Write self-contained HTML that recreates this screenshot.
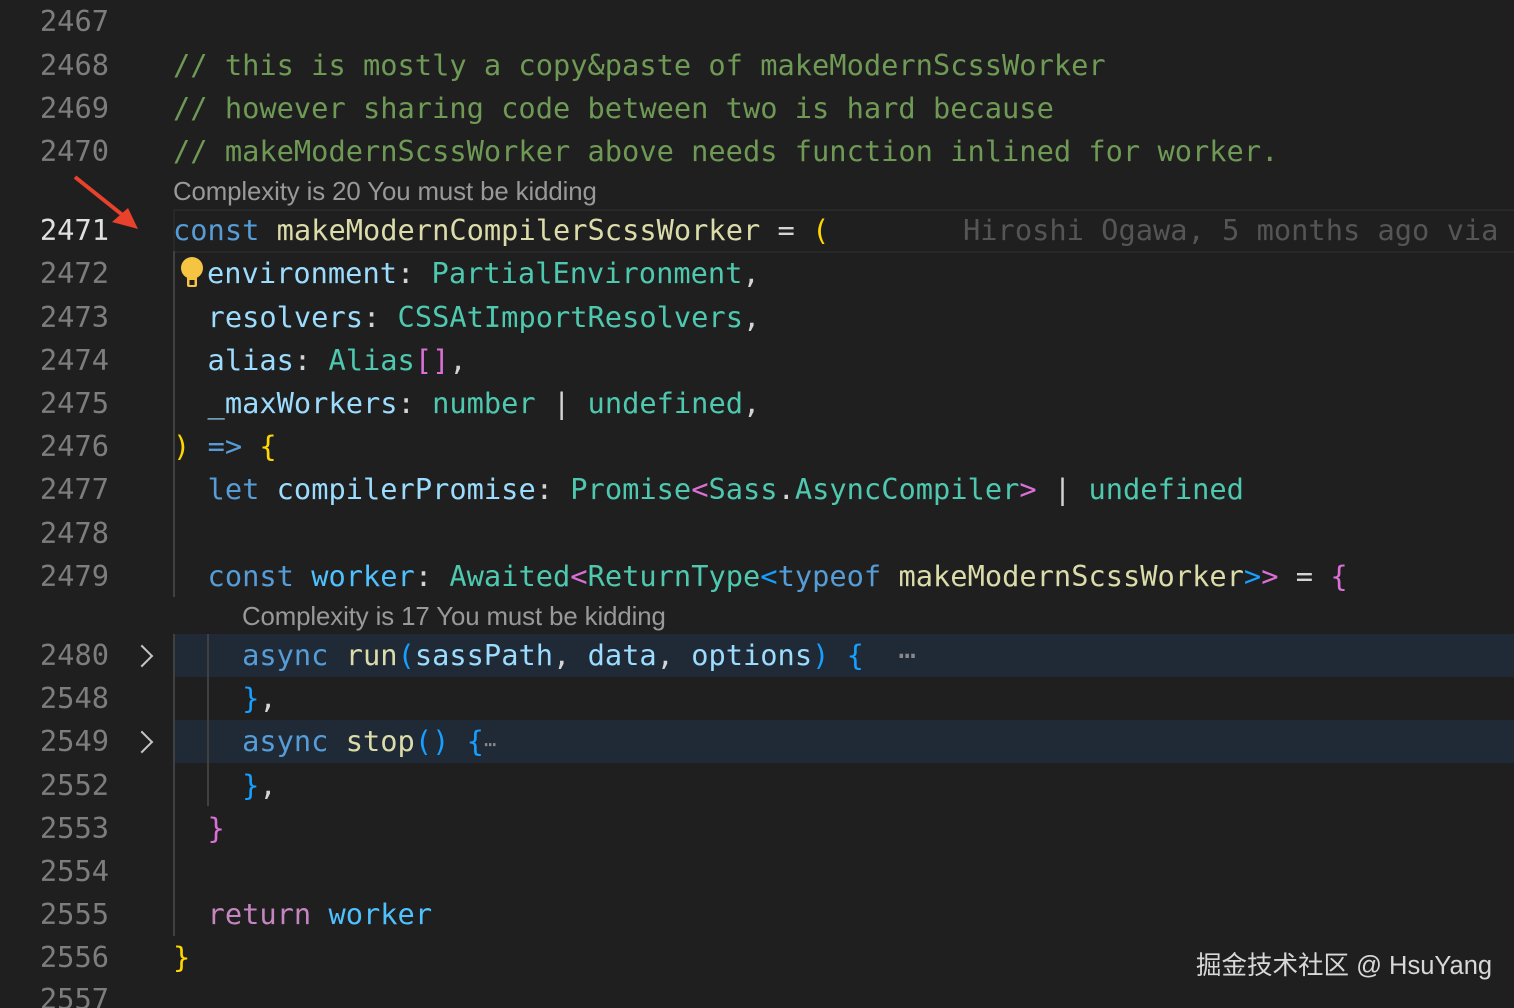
<!DOCTYPE html>
<html><head><meta charset="utf-8"><style>
html,body{margin:0;padding:0;background:#1f1f1f;width:1514px;height:1008px;overflow:hidden;position:relative}
.ln{position:absolute;left:0;width:109px;text-align:right;font:28.7px/43px "DejaVu Sans Mono","Liberation Mono",monospace;color:#7d7d7d;margin-top:2px}
.c{position:absolute;left:173px;white-space:pre;font:28.7px/43px "DejaVu Sans Mono","Liberation Mono",monospace;color:#d4d4d4;margin-top:2px}
.lens{position:absolute;white-space:pre;font:25.8px/30px "Liberation Sans",sans-serif;color:#999;letter-spacing:-0.1px}
.k{color:#569cd6}.f{color:#dcdcaa}.v{color:#9cdcfe}.t{color:#4ec9b0}.cm{color:#6f9a55}
.y{color:#ffd700}.p{color:#da70d6}.b{color:#179fff}.r{color:#c586c0}.cn{color:#4fc1ff}
.hl{position:absolute;left:173px;right:0;background:#1f2a36}
.g{position:absolute;width:2px;background:#404040}
.chev{position:absolute;left:137px;width:14px;height:14px;border-right:2px solid #c5c5c5;border-top:2px solid #c5c5c5;transform:rotate(45deg)}
</style></head><body>
<div class="hl" style="top:634px;height:43px"></div>
<div class="hl" style="top:720px;height:43px"></div>
<div style="position:absolute;left:173px;right:0;top:209px;height:40px;border:2px solid #282828;border-right:none"></div>
<div class="g" style="left:173px;top:251px;height:346px"></div>
<div class="g" style="left:173px;top:634px;height:302px"></div>
<div class="g" style="left:207px;top:634px;height:172px"></div>

<div class="ln" style="top:-2px">2467</div>
<div class="ln" style="top:42px">2468</div>
<div class="c cm" style="top:42px">// this is mostly a copy&amp;paste of makeModernScssWorker</div>
<div class="ln" style="top:85px">2469</div>
<div class="c cm" style="top:85px">// however sharing code between two is hard because</div>
<div class="ln" style="top:128px">2470</div>
<div class="c cm" style="top:128px">// makeModernScssWorker above needs function inlined for worker.</div>
<div class="lens" style="left:173px;top:177px">Complexity is 20 You must be kidding</div>
<svg style="position:absolute;left:70px;top:172px" width="75" height="62"><line x1="5" y1="5" x2="55" y2="45" stroke="#e8412c" stroke-width="4"/><polygon points="68,57 42,50 58,36" fill="#e8412c"/></svg>
<div class="ln" style="top:207px;color:#e0e0e0">2471</div>
<div class="c" style="top:207px"><span class="k">const</span> <span class="f">makeModernCompilerScssWorker</span> = <span class="y">(</span></div>
<div class="c" style="top:207px;left:963px;color:#555">Hiroshi Ogawa, 5 months ago via</div>
<div class="ln" style="top:250px">2472</div>
<div class="c" style="top:250px;left:207px"><span class="v">environment</span>: <span class="t">PartialEnvironment</span>,</div>
<svg style="position:absolute;left:180px;top:256px" width="24" height="34"><circle cx="12" cy="12" r="11" fill="#f5c443"/><rect x="7" y="20" width="10" height="11" rx="2" fill="#f5c443"/><rect x="9.5" y="24" width="5" height="5" fill="#1f1f1f"/></svg>
<div class="ln" style="top:294px">2473</div>
<div class="c" style="top:294px"><span class="v">  resolvers</span>: <span class="t">CSSAtImportResolvers</span>,</div>
<div class="ln" style="top:337px">2474</div>
<div class="c" style="top:337px"><span class="v">  alias</span>: <span class="t">Alias</span><span class="p">[]</span>,</div>
<div class="ln" style="top:380px">2475</div>
<div class="c" style="top:380px"><span class="v">  _maxWorkers</span>: <span class="t">number</span> | <span class="t">undefined</span>,</div>
<div class="ln" style="top:423px">2476</div>
<div class="c" style="top:423px"><span class="y">)</span> <span class="k">=&gt;</span> <span class="y">{</span></div>
<div class="ln" style="top:466px">2477</div>
<div class="c" style="top:466px">  <span class="k">let</span> <span class="v">compilerPromise</span>: <span class="t">Promise</span><span class="p">&lt;</span><span class="t">Sass</span>.<span class="t">AsyncCompiler</span><span class="p">&gt;</span> | <span class="t">undefined</span></div>
<div class="ln" style="top:510px">2478</div>
<div class="ln" style="top:553px">2479</div>
<div class="c" style="top:553px">  <span class="k">const</span> <span class="cn">worker</span>: <span class="t">Awaited</span><span class="p">&lt;</span><span class="t">ReturnType</span><span class="b">&lt;</span><span class="k">typeof</span> <span class="f">makeModernScssWorker</span><span class="b">&gt;</span><span class="p">&gt;</span> = <span class="p">{</span></div>
<div class="lens" style="left:242px;top:602px">Complexity is 17 You must be kidding</div>
<div class="ln" style="top:632px">2480</div>
<div class="chev" style="top:648px;left:134px"></div>
<div class="c" style="top:632px">    <span class="k">async</span> <span class="f">run</span><span class="b">(</span><span class="v">sassPath</span>, <span class="v">data</span>, <span class="v">options</span><span class="b">)</span> <span class="b">{</span>  <span style="color:#888">⋯</span></div>
<div class="ln" style="top:675px">2548</div>
<div class="c" style="top:675px">    <span class="b">}</span>,</div>
<div class="ln" style="top:718px">2549</div>
<div class="chev" style="top:734px;left:134px"></div>
<div class="c" style="top:718px">    <span class="k">async</span> <span class="f">stop</span><span class="b">()</span> <span class="b">{</span><span style="color:#888;font-size:20px">⋯</span></div>
<div class="ln" style="top:762px">2552</div>
<div class="c" style="top:762px">    <span class="b">}</span>,</div>
<div class="ln" style="top:805px">2553</div>
<div class="c" style="top:805px">  <span class="p">}</span></div>
<div class="ln" style="top:848px">2554</div>
<div class="ln" style="top:891px">2555</div>
<div class="c" style="top:891px">  <span class="r">return</span> <span class="cn">worker</span></div>
<div class="ln" style="top:934px">2556</div>
<div class="c" style="top:934px"><span class="y">}</span></div>
<div class="ln" style="top:976px">2557</div>
<div style="position:absolute;left:1196px;top:949px;font:25.5px/34px 'Liberation Sans','Noto Sans CJK SC',sans-serif;color:#d8d8d8">掘金技术社区 @ HsuYang</div>
</body></html>
